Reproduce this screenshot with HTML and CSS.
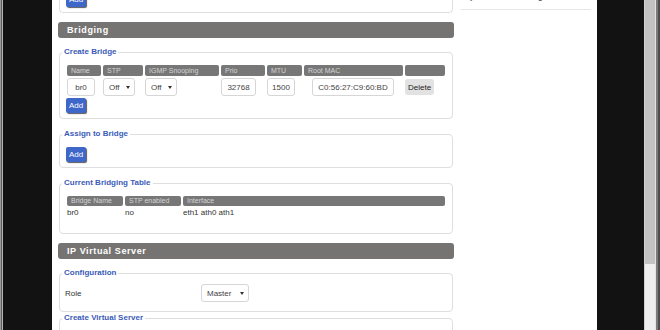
FILE: index.html
```html
<!DOCTYPE html>
<html lang="en">
<head>
    <meta charset="UTF-8">
    <meta name="viewport" content="width=device-width, initial-scale=1.0">
    <title>Networking</title>

    <link rel="stylesheet" href="styles.css">

</head>
<body>
    <div class="edge edge-left"></div>
    <div class="frame"></div>

    <div class="page">
        <div class="page-inner">
            <div class="main">

                <!-- tail of the VLAN tagging block, scrolled away -->
                <fieldset class="box">
                    <legend>Tagging</legend>
                    <button class="btn-add">Add</button>
                </fieldset>

                <h2 class="section">Bridging</h2>

                <fieldset class="box">
                    <legend>Create Bridge</legend>
                    <table class="grid">
                        <colgroup>
                            <col class="w34"><col class="w40"><col class="w74"><col class="w44"><col class="w35"><col class="w99"><col>
                        </colgroup>
                        <tr class="head">
                            <th>Name</th>
                            <th>STP</th>
                            <th>IGMP Snooping</th>
                            <th>Prio</th>
                            <th>MTU</th>
                            <th>Root MAC</th>
                            <th></th>
                        </tr>
                        <tr class="inputs">
                            <td><input class="field w-name" type="text" value="br0"></td>
                            <td><span class="pick"><select><option>Off</option><option>On</option></select></span></td>
                            <td><span class="pick"><select><option>Off</option><option>On</option></select></span></td>
                            <td><input class="field w-prio" type="text" value="32768"></td>
                            <td><input class="field w-mtu" type="text" value="1500"></td>
                            <td><input class="field w-mac" type="text" value="C0:56:27:C9:60:BD"></td>
                            <td><button class="btn-del">Delete</button></td>
                        </tr>
                    </table>
                    <button class="btn-add">Add</button>
                </fieldset>

                <fieldset class="box">
                    <legend>Assign to Bridge</legend>
                    <button class="btn-add">Add</button>
                </fieldset>

                <fieldset class="box">
                    <legend>Current Bridging Table</legend>
                    <table class="grid grid-list">
                        <colgroup>
                            <col class="w56"><col class="w56"><col>
                        </colgroup>
                        <tr class="head">
                            <th>Bridge Name</th>
                            <th>STP enabled</th>
                            <th>Interface</th>
                        </tr>
                        <tr class="data">
                            <td>br0</td>
                            <td>no</td>
                            <td>eth1 ath0 ath1</td>
                        </tr>
                    </table>
                </fieldset>

                <h2 class="section">IP Virtual Server</h2>

                <fieldset class="box box-tight">
                    <legend>Configuration</legend>
                    <div class="row">
                        <span class="label">Role</span>
                        <span class="pick"><select class="w-role"><option>Master</option><option>Backup</option></select></span>
                    </div>
                </fieldset>

                <fieldset class="box">
                    <legend>Create Virtual Server</legend>
                    <div class="row"></div>
                </fieldset>

            </div>

            <div class="side">
                <p class="help">Assign to Bridge: assigns<br>any interface to a bridge.</p>
            </div>
        </div>
    </div>

    <div class="frame frame-right"></div>
    <div class="scrollbar"><div class="thumb"></div></div>
    <div class="edge edge-right"></div>
</body>
</html>
```

FILE: styles.css
```css
/* --- window frame --- */
body {
    margin: 0;
    display: flex;
    height: 330px;
    overflow: hidden;
    background-color: #121212;
    font-family: "Liberation Sans", Arial, sans-serif;
    font-size: 8px;
    color: #333;
}

.edge-left {
    width: 3px;
    background: linear-gradient(to right, #9a9a9a 0 1px, #5e5e5e 1px 2px, #b4b4b4 2px 3px);
}

.frame {
    width: 49px;
    background-color: #121212;
}

.frame-right {
    width: 47px;
}

.scrollbar {
    width: 12px;
    box-sizing: border-box;
    background-color: #efefef;
    border-left: 1px solid #d2d2d2;
    border-right: 1px solid #e4e4e4;
}

.thumb {
    height: 264px;
    background-color: #c3c3c3;
}

.edge-right {
    width: 4px;
    background: linear-gradient(to right, #7c7c7c 0 2px, #4e4e4e 2px 4px);
}

/* --- page (scrolled part way down) --- */
.page {
    width: 545px;
    background-color: #fff;
    overflow: hidden;
}

.page-inner {
    display: flex;
    gap: 7px;
    padding: 0 6px;
    margin-top: -27px;
}

.main {
    width: 396px;
    flex: none;
}

.side {
    width: 130px;
    flex: none;
}

.help {
    margin: 0;
    padding: 7px 0 7px;
    line-height: 11px;
    color: #333;
    border-bottom: 1px solid #e6e6e6;
}

/* --- section headers --- */
.section {
    margin: 0 0 8px;
    height: 16px;
    line-height: 16px;
    padding-left: 9px;
    background-color: #767472;
    border-radius: 3px;
    color: #fff;
    font-size: 9px;
    font-weight: bold;
    letter-spacing: 0.6px;
}

/* --- fieldsets --- */
.box {
    margin: 0 1px 9px;
    padding: 7px 5px 5px;
    border: 1px solid #dedede;
    border-radius: 4px;
    min-inline-size: 0;
}

.box-tight {
    margin-bottom: 0;
}

.box legend {
    margin-left: -3px;
    padding: 0 2px;
    line-height: 12px;
    font-size: 8px;
    font-weight: bold;
    color: #3b5bb7;
}

/* --- tables --- */
.grid {
    width: 100%;
    table-layout: fixed;
    border-spacing: 2px;
    margin-top: -2px;
}

.grid-list {
    margin-bottom: 8px;
}

.w34 { width: 34px; }
.w35 { width: 35px; }
.w40 { width: 40px; }
.w44 { width: 44px; }
.w56 { width: 56px; }
.w74 { width: 74px; }
.w99 { width: 99px; }

.grid th {
    height: 11px;
    padding: 0 4px;
    line-height: 11px;
    background-color: #777;
    border-radius: 2px;
    color: #d4d4d4;
    font-size: 7px;
    font-weight: normal;
    text-align: left;
    white-space: nowrap;
    overflow: hidden;
}

.grid-list th {
    height: 10px;
    line-height: 10px;
}

.grid td {
    padding: 0;
    vertical-align: top;
}

.grid .data td {
    line-height: 10px;
    color: #333;
}

/* --- form controls --- */
.field {
    height: 18px;
    box-sizing: border-box;
    padding: 0;
    border: 1px solid #d6d6d6;
    border-radius: 3px;
    background-color: #fff;
    font-family: inherit;
    font-size: 8px;
    color: #444;
    text-align: center;
}

.w-name { width: 28px; }
.w-prio { width: 35px; }
.w-mtu  { width: 28px; }
.w-mac  { width: 82px; margin-left: 8px; }

.pick {
    position: relative;
    display: inline-block;
}

.pick select {
    appearance: none;
    -webkit-appearance: none;
    width: 32px;
    height: 18px;
    box-sizing: border-box;
    padding: 0 0 0 5px;
    border: 1px solid #d6d6d6;
    border-radius: 3px;
    background-color: #fff;
    font-family: inherit;
    font-size: 8px;
    color: #444;
}

.pick select.w-role {
    width: 48px;
}

/* small down arrow over the select */
.pick::after {
    content: "";
    position: absolute;
    right: 5px;
    top: 8px;
    border-left: 2px solid transparent;
    border-right: 2px solid transparent;
    border-top: 3px solid #333;
    pointer-events: none;
}

.btn-add {
    display: block;
    height: 15px;
    padding: 0 3px;
    margin-left: 1px;
    border: none;
    border-radius: 2px;
    background-color: #3f66c9;
    box-shadow: 1px 1px 1px rgba(0, 0, 0, 0.65);
    color: #fff;
    font-family: inherit;
    font-size: 8px;
}

.btn-del {
    height: 16px;
    margin-top: 1px;
    padding: 0 3px;
    border: none;
    border-radius: 3px;
    background-color: #e2e2e2;
    color: #222;
    font-family: inherit;
    font-size: 8px;
}

.row {
    display: flex;
    align-items: center;
    height: 18px;
    margin: -2px 0 4px;
}

.label {
    width: 136px;
    color: #333;
}
```
